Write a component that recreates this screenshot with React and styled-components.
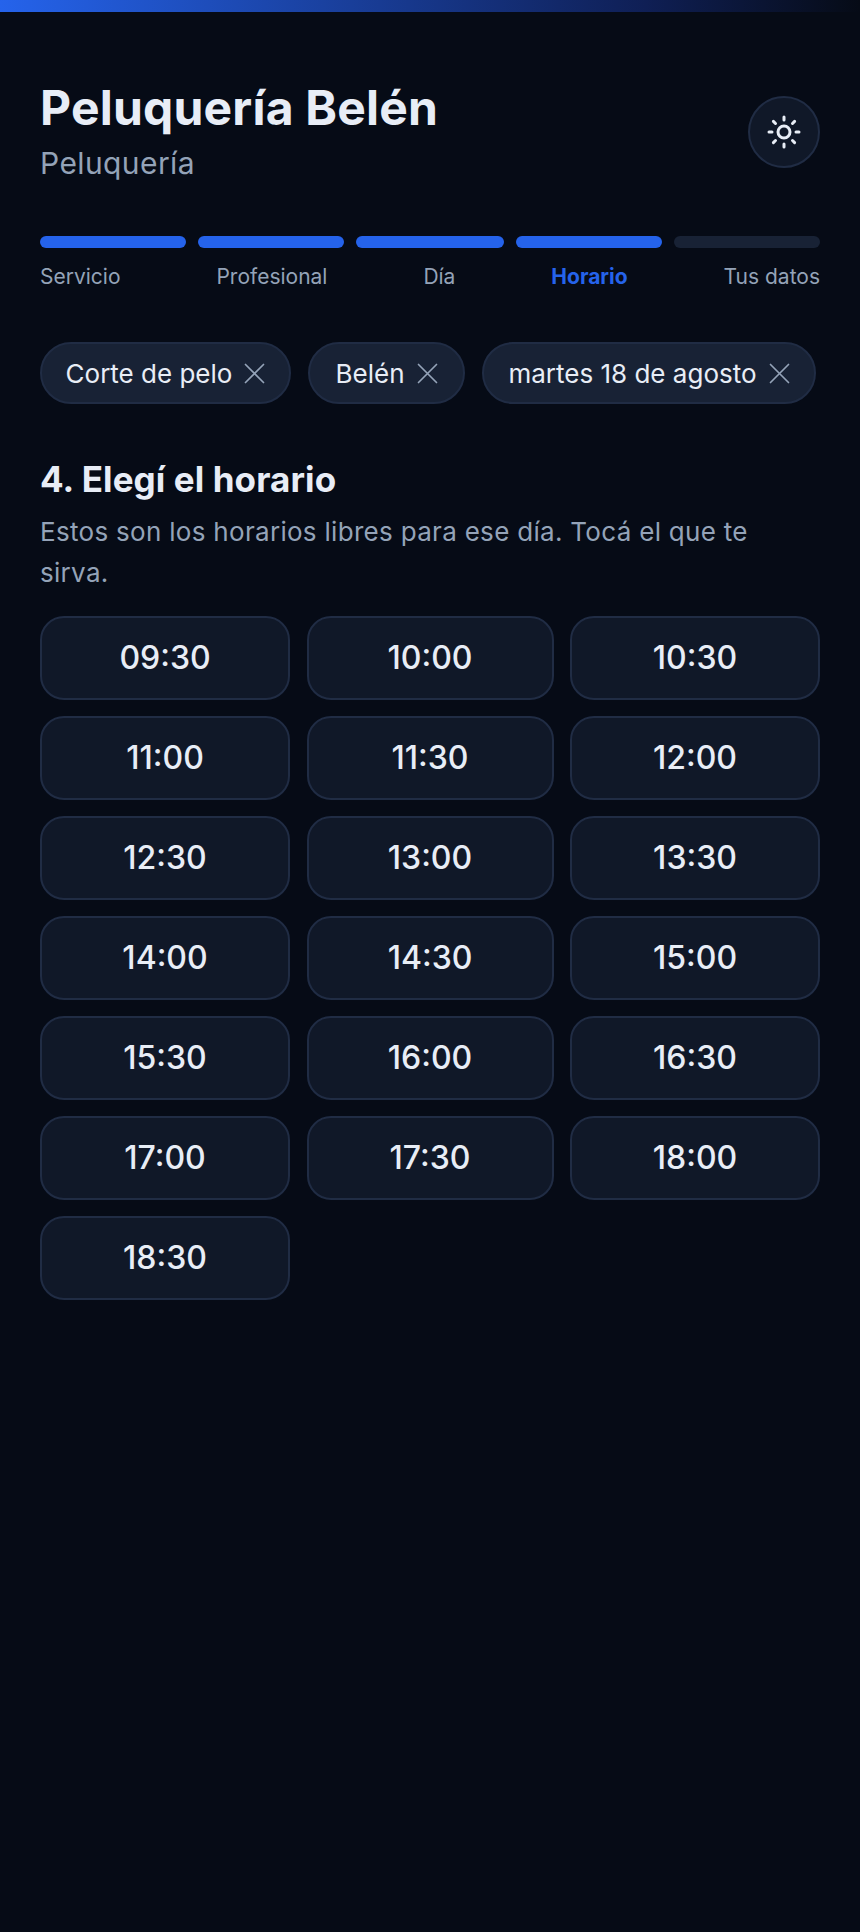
import React from "react";
import styled, { createGlobalStyle } from "styled-components";
import { Sun } from "lucide-react";

const Global = createGlobalStyle`
  html, body { margin: 0; padding: 0; background: #060b16; }
  * { box-sizing: border-box; }
  body { font-family: Inter, "Liberation Sans", sans-serif; }
`;
const Page = styled.div`
  width: 860px; min-height: 1932px; background: #060b16; color: #e8edf6;
`;
const TopBar = styled.div`
  height: 12px; background: linear-gradient(90deg, #2563eb 0%, #0f1f55 75%, #060b16 100%);
`;
const Content = styled.main`
  padding: 67px 40px 40px;
`;
const Header = styled.header`
  display: flex; justify-content: space-between; align-items: center; margin-bottom: 51px;
`;
const Title = styled.h1`
  margin: 0 0 5px; font-size: 48px; line-height: 58px; font-weight: 700; letter-spacing: 0.2px; color: #e8edf6;
`;
const Subtitle = styled.p`
  margin: 0; font-size: 30px; line-height: 43px; font-weight: 400; color: #94a3b8; letter-spacing: 0.4px;
`;
const ThemeButton = styled.button`
  width: 72px; height: 72px; border-radius: 50%; background: #101828; border: 2px solid #202c44;
  color: #e8edf6; display: flex; align-items: center; justify-content: center; padding: 0;
`;
const Bars = styled.div`
  display: grid; grid-template-columns: 146px 146px 148px 146px 146px; column-gap: 12px; margin-bottom: 17px;
`;
const Bar = styled.div`
  height: 12px; border-radius: 6px; background: ${p => (p.$on ? "#2563eb" : "#182235")};
`;
const Labels = styled.div`
  display: flex; justify-content: space-between; margin-bottom: 53px;
`;
const Label = styled.div`
  font-size: 21px; line-height: 24px;
  font-weight: ${p => (p.$current ? 700 : 400)}; color: ${p => (p.$current ? "#2563eb" : "#94a3b8")};
  white-space: nowrap;
`;
const Chips = styled.div`
  display: flex; gap: 17px; margin-bottom: 53px;
`;
const Chip = styled.div`
  width: ${p => p.$width}px; height: 62px; border-radius: 31px; background: #182235; border: 2px solid #202c44;
  display: flex; align-items: center; justify-content: center; gap: 12px;
  font-size: 26px; color: #e8edf6; white-space: nowrap;
  svg { color: #94a3b8; }
`;
const Heading = styled.h2`
  margin: 0 0 10px; font-size: 35px; line-height: 44px; font-weight: 700; color: #e8edf6; letter-spacing: 0.1px;
`;
const Hint = styled.p`
  margin: 0 0 23px; font-size: 26px; line-height: 41px; color: #94a3b8; letter-spacing: 0.3px;
`;
const Slots = styled.div`
  display: grid; grid-template-columns: 250px 247px 250px; column-gap: 16.5px; row-gap: 16px;
`;
const Slot = styled.button`
  height: 84px; border-radius: 24px; background: #101828; border: 2px solid #202c44;
  color: #e8edf6; font-family: inherit; font-size: 32px; font-weight: 500; padding: 0 0 2px;
`;

const CloseIcon = () => (
  <svg width="21" height="21" viewBox="0 0 21 21" fill="none" stroke="currentColor" strokeWidth="1.7" strokeLinecap="round">
    <path d="M1.5 1.5 L19.5 19.5 M19.5 1.5 L1.5 19.5" />
  </svg>
);

const steps = [
  ["Servicio", true], ["Profesional", true], ["Día", true], ["Horario", true, true], ["Tus datos", false],
];
const chips = [["Corte de pelo", 251], ["Belén", 157], ["martes 18 de agosto", 334]];
const slots = ["09:30","10:00","10:30","11:00","11:30","12:00","12:30","13:00","13:30","14:00","14:30","15:00","15:30","16:00","16:30","17:00","17:30","18:00","18:30"];

export default function App() {
  return (
    <Page>
      <Global />
      <TopBar />
      <Content>
        <Header>
          <div>
            <Title>Peluquería Belén</Title>
            <Subtitle>Peluquería</Subtitle>
          </div>
          <ThemeButton aria-label="Tema"><Sun size={36} strokeWidth={2} /></ThemeButton>
        </Header>
        <Bars>
          {steps.map(([t, on]) => <Bar key={t} $on={on} />)}
        </Bars>
        <Labels>
          {steps.map(([t, , cur]) => <Label key={t} $current={cur}>{t}</Label>)}
        </Labels>
        <Chips>
          {chips.map(([c, w]) => <Chip key={c} $width={w}>{c}<CloseIcon /></Chip>)}
        </Chips>
        <Heading>4. Elegí el horario</Heading>
        <Hint>Estos son los horarios libres para ese día. Tocá el que te sirva.</Hint>
        <Slots>
          {slots.map(s => <Slot key={s}>{s}</Slot>)}
        </Slots>
      </Content>
    </Page>
  );
}
